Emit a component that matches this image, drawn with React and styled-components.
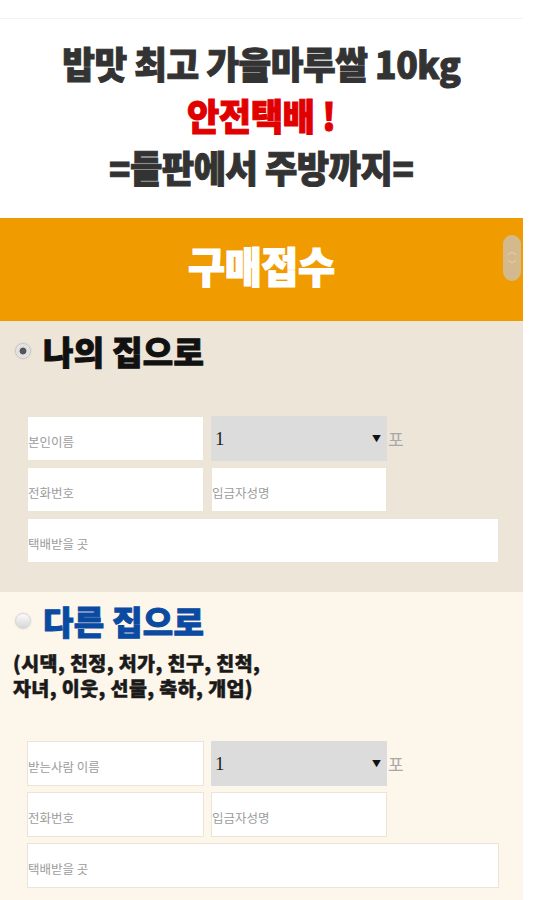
import React from "react";
import styled, { createGlobalStyle } from "styled-components";

const Global = createGlobalStyle`
  html, body { margin: 0; padding: 0; background: #ffffff; }
  body { font-family: "Noto Sans CJK KR", "Noto Sans", sans-serif; }
  * { box-sizing: border-box; }
`;

const Page = styled.div`
  width: 523px;
  display: flex;
  flex-direction: column;
`;

const Header = styled.header`
  margin-top: 18px;
  border-top: 1px solid #f3f3f3;
  padding: 18px 0 25px;
  display: flex;
  flex-direction: column;
  align-items: center;
`;

const TitleLine = styled.div`
  font-family: "Noto Sans CJK KR", sans-serif;
  font-weight: 900;
  font-size: 37px;
  line-height: 52px;
  height: 52px;
  color: ${(p) => p.$color || "#333333"};
  -webkit-text-stroke: 1px ${(p) => p.$color || "#333333"};
  letter-spacing: -0.5px;
  white-space: nowrap;
  transform: scaleX(${(p) => p.$scale || 0.97});
`;

const OrderBar = styled.div`
  position: relative;
  height: 103px;
  background: #f09b00;
  display: flex;
  align-items: center;
  justify-content: center;
  padding-bottom: 10px;
`;

const OrderTitle = styled.h1`
  margin: 0;
  font-family: "Noto Sans CJK KR", sans-serif;
  font-weight: 900;
  font-size: 42px;
  color: #ffffff;
  -webkit-text-stroke: 1.2px #ffffff;
  letter-spacing: -0.5px;
  transform: scaleX(0.96);
`;

const ScrollKnob = styled.div`
  position: absolute;
  right: 2px;
  top: 17px;
  width: 18px;
  height: 46px;
  border-radius: 9px;
  background: #d4b98d;
  display: flex;
  flex-direction: column;
  align-items: center;
  justify-content: center;
  gap: 6px;
  color: #e9d6b5;
  font-size: 9px;
  line-height: 8px;
`;

const Section = styled.section`
  background: ${(p) => p.$bg};
  padding: ${(p) => p.$pad};
  display: flex;
  flex-direction: column;
`;

const HeadingRow = styled.label`
  display: flex;
  align-items: center;
  height: 40px;
  padding-left: 15px;
  gap: 12px;
`;

const Radio = styled.span`
  width: 16px;
  height: 16px;
  border-radius: 50%;
  border: 1px solid ${(p) => (p.$checked ? "#c8c8c8" : "#d8d8d8")};
  box-shadow: 0 0 2px rgba(0, 0, 0, 0.12);
  background: ${(p) =>
    p.$checked
      ? "radial-gradient(circle at 50% 50%, #555555 0, #555555 3px, #dcdcdc 3.8px, #f3f3f3 100%)"
      : "linear-gradient(#fbfbfb, #d6d6d6)"};
  flex: none;
`;

const Heading = styled.span`
  font-family: "Noto Sans CJK KR", sans-serif;
  font-weight: 900;
  font-size: 33px;
  line-height: 40px;
  color: ${(p) => p.$color};
  -webkit-text-stroke: 1px ${(p) => p.$color};
  letter-spacing: 0.3px;
`;

const SubText = styled.p`
  margin: 9px 0 0;
  padding-left: 13px;
  font-family: "Noto Sans CJK KR", sans-serif;
  font-weight: 900;
  font-size: 19.5px;
  line-height: 25px;
  color: #1a1a1a;
  -webkit-text-stroke: 0.5px #1a1a1a;
  letter-spacing: 0.4px;
`;

const Form = styled.div`
  margin-top: ${(p) => p.$top}px;
  padding-left: 27px;
  display: flex;
  flex-direction: column;
  gap: 6px;
`;

const Row = styled.div`
  display: flex;
  align-items: stretch;
  gap: 7px;
  height: 45px;
`;

const Field = styled.input`
  width: ${(p) => p.$w}px;
  height: 45px;
  border: 1px solid #ebe5d8;
  background: #ffffff;
  padding: 6px 0 0 0;
  font-family: "Noto Sans CJK KR", sans-serif;
  font-size: 12.5px;
  color: #333;
  outline: none;
  &::placeholder { color: #9c9c9c; }
`;

const SelectBox = styled.div`
  width: 176px;
  background: #dcdcdc;
  display: flex;
  align-items: center;
  padding: 0 6px 0 4px;
`;

const Select = styled.select`
  appearance: none;
  -webkit-appearance: none;
  flex: 1;
  border: none;
  background: transparent;
  font-family: "Liberation Serif", serif;
  font-size: 19px;
  color: #1e1e1e;
  outline: none;
  padding: 0;
`;

const Arrow = styled.span`
  font-size: 9px;
  color: #111;
`;

const Unit = styled.span`
  align-self: center;
  margin-left: -6px;
  font-family: "Liberation Serif", "Noto Sans CJK KR", serif;
  font-size: 17px;
  color: #a8a8a8;
`;

function OrderForm({ top, namePlaceholder }) {
  return (
    <Form $top={top}>
      <Row>
        <Field $w={177} placeholder={namePlaceholder} />
        <SelectBox>
          <Select defaultValue="1">
            <option value="1">1</option>
            <option value="2">2</option>
            <option value="3">3</option>
          </Select>
          <Arrow>▼</Arrow>
        </SelectBox>
        <Unit>포</Unit>
      </Row>
      <Row>
        <Field $w={177} placeholder="전화번호" />
        <Field $w={176} placeholder="입금자성명" />
      </Row>
      <Row>
        <Field $w={472} placeholder="택배받을 곳" />
      </Row>
    </Form>
  );
}

export default function App() {
  return (
    <>
      <Global />
      <Page>
        <Header>
          <TitleLine $scale={0.96}>밥맛 최고 가을마루쌀 10kg</TitleLine>
          <TitleLine $color="#e00000" $scale={0.95}>안전택배 !</TitleLine>
          <TitleLine $scale={0.95}>=들판에서 주방까지=</TitleLine>
        </Header>
        <OrderBar>
          <OrderTitle>구매접수</OrderTitle>
          <ScrollKnob>
            <span>︿</span>
            <span>﹀</span>
          </ScrollKnob>
        </OrderBar>
        <Section $bg="#ece5d8" $pad="10px 0 29px">
          <HeadingRow>
            <Radio $checked />
            <Heading $color="#111111">나의 집으로</Heading>
          </HeadingRow>
          <OrderForm top={45} namePlaceholder="본인이름" />
        </Section>
        <Section $bg="#fdf6ea" $pad="9px 0 20px">
          <HeadingRow>
            <Radio />
            <Heading $color="#0b4aa2">다른 집으로</Heading>
          </HeadingRow>
          <SubText>
            (시댁, 친정, 처가, 친구, 친척,
            <br />
            자녀, 이웃, 선물, 축하, 개업)
          </SubText>
          <OrderForm top={41} namePlaceholder="받는사람 이름" />
        </Section>
      </Page>
    </>
  );
}
